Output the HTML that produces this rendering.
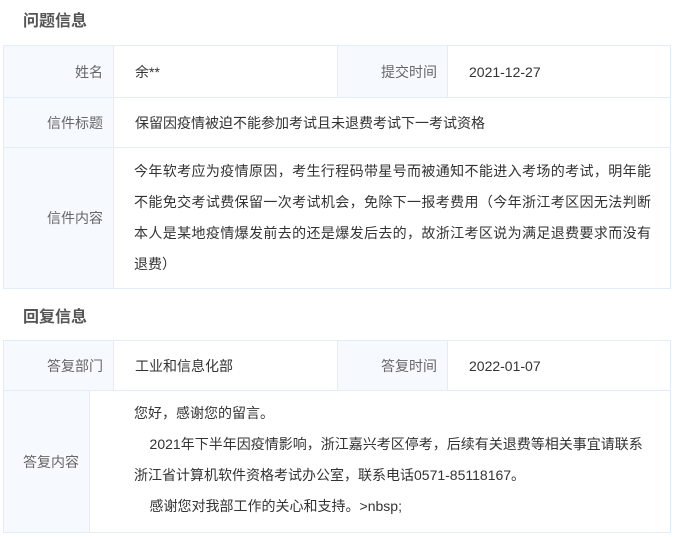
<!DOCTYPE html>
<html><head><meta charset="utf-8"><style>
body{margin:0;width:674px;height:537px;background:#fff;font-family:"Liberation Sans","Noto Sans CJK SC",sans-serif;position:relative;overflow:hidden}
.h{position:absolute;left:23px;font-size:16px;font-weight:bold;color:#555}
.b{position:absolute;box-sizing:border-box;border:1px solid #e1edf8}
.l{background:#f6fafe;color:#666;font-size:14px;text-align:right;padding-right:10px;display:flex;align-items:center;justify-content:flex-end}
.v{color:#333;font-size:14px;display:flex;align-items:center;padding-left:21px}
.t{color:#333;font-size:14px;line-height:31px;position:absolute}
.j{display:block;text-align:justify;text-align-last:justify;white-space:nowrap;text-justify:inter-character}
.j2{display:block;white-space:nowrap}
</style></head><body>
<div class="h" style="top:7px">问题信息</div>
<div class="b l" style="left:3px;top:45px;width:111px;height:53px">姓名</div>
<div class="b v" style="left:113px;top:45px;width:225px;height:53px">余**</div>
<div class="b l" style="left:337px;top:45px;width:111px;height:53px">提交时间</div>
<div class="b v" style="left:447px;top:45px;width:224px;height:53px">2021-12-27</div>
<div class="b l" style="left:3px;top:97px;width:111px;height:51px">信件标题</div>
<div class="b v" style="left:113px;top:97px;width:558px;height:51px">保留因疫情被迫不能参加考试且未退费考试下一考试资格</div>
<div class="b l" style="left:3px;top:147px;width:111px;height:142px">信件内容</div>
<div class="b" style="left:113px;top:147px;width:558px;height:142px"></div>
<div class="t" style="left:134px;top:156px;width:517px">
<span class="j">今年软考应为疫情原因，考生行程码带星号而被通知不能进入考场的考试，明年能</span>
<span class="j">不能免交考试费保留一次考试机会，免除下一报考费用（今年浙江考区因无法判断</span>
<span class="j">本人是某地疫情爆发前去的还是爆发后去的，故浙江考区说为满足退费要求而没有</span>
<span class="j2">退费）</span></div>
<div class="h" style="top:303px">回复信息</div>
<div class="b l" style="left:3px;top:340px;width:111px;height:51px">答复部门</div>
<div class="b v" style="left:113px;top:340px;width:225px;height:51px">工业和信息化部</div>
<div class="b l" style="left:337px;top:340px;width:111px;height:51px">答复时间</div>
<div class="b v" style="left:447px;top:340px;width:224px;height:51px">2022-01-07</div>
<div class="b l" style="left:3px;top:390px;width:87px;height:143px">答复内容</div>
<div class="b" style="left:89px;top:390px;width:582px;height:143px"></div>
<div class="t" style="left:134px;top:398px;width:520px">
<span class="j2">您好，感谢您的留言。</span>
<span class="j2">&nbsp;&nbsp;&nbsp;&nbsp;2021年下半年因疫情影响，浙江嘉兴考区停考，后续有关退费等相关事宜请联系</span>
<span class="j2">浙江省计算机软件资格考试办公室，联系电话0571-85118167。</span>
<span class="j2">&nbsp;&nbsp;&nbsp;&nbsp;感谢您对我部工作的关心和支持。&gt;nbsp;</span></div>
</body></html>
